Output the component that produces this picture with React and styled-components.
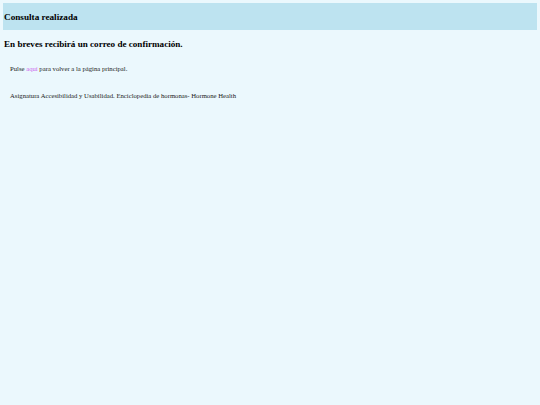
import React from 'react'
import styled, { createGlobalStyle } from 'styled-components'

const GlobalStyle = createGlobalStyle`
    html, body {
        margin: 0;
        padding: 0;
        background-color: #ebf8fd;
        font-family: "Liberation Serif", "Times New Roman", serif;
        color: #000;
    }
    body {
        min-height: 405px;
    }
`;

const Page = styled.div`
    padding: 3px 3px 0 3px;
`;

const Header = styled.header`
    display: flex;
    align-items: center;
    height: 27px;
    padding: 0 1px;
    background-color: #bde3f0;
`;

const Title = styled.h1`
    margin: 0;
    font-size: 9.2px;
    font-weight: bold;
`;

const Subtitle = styled.h2`
    margin: 9px 1px 0 1px;
    font-size: 9.1px;
    font-weight: bold;
`;

const Text = styled.p`
    margin: ${props => props.top || 0}px 0 0 7px;
    font-size: 6.7px;
    color: #222;
`;

const Anchor = styled.a`
    color: #cc66ee;
    text-decoration: none;
`;

const App = () => (
    <Page>
        <GlobalStyle />
        <Header>
            <Title>Consulta realizada</Title>
        </Header>
        <Subtitle>En breves recibirá un correo de confirmación.</Subtitle>
        <Text top={16}>Pulse <Anchor href="#">aquí</Anchor> para volver a la página principal.</Text>
        <Text top={20}>Asignatura Accesibilidad y Usabilidad. Enciclopedia de hormonas- Hormone Health</Text>
    </Page>
)

export default App
